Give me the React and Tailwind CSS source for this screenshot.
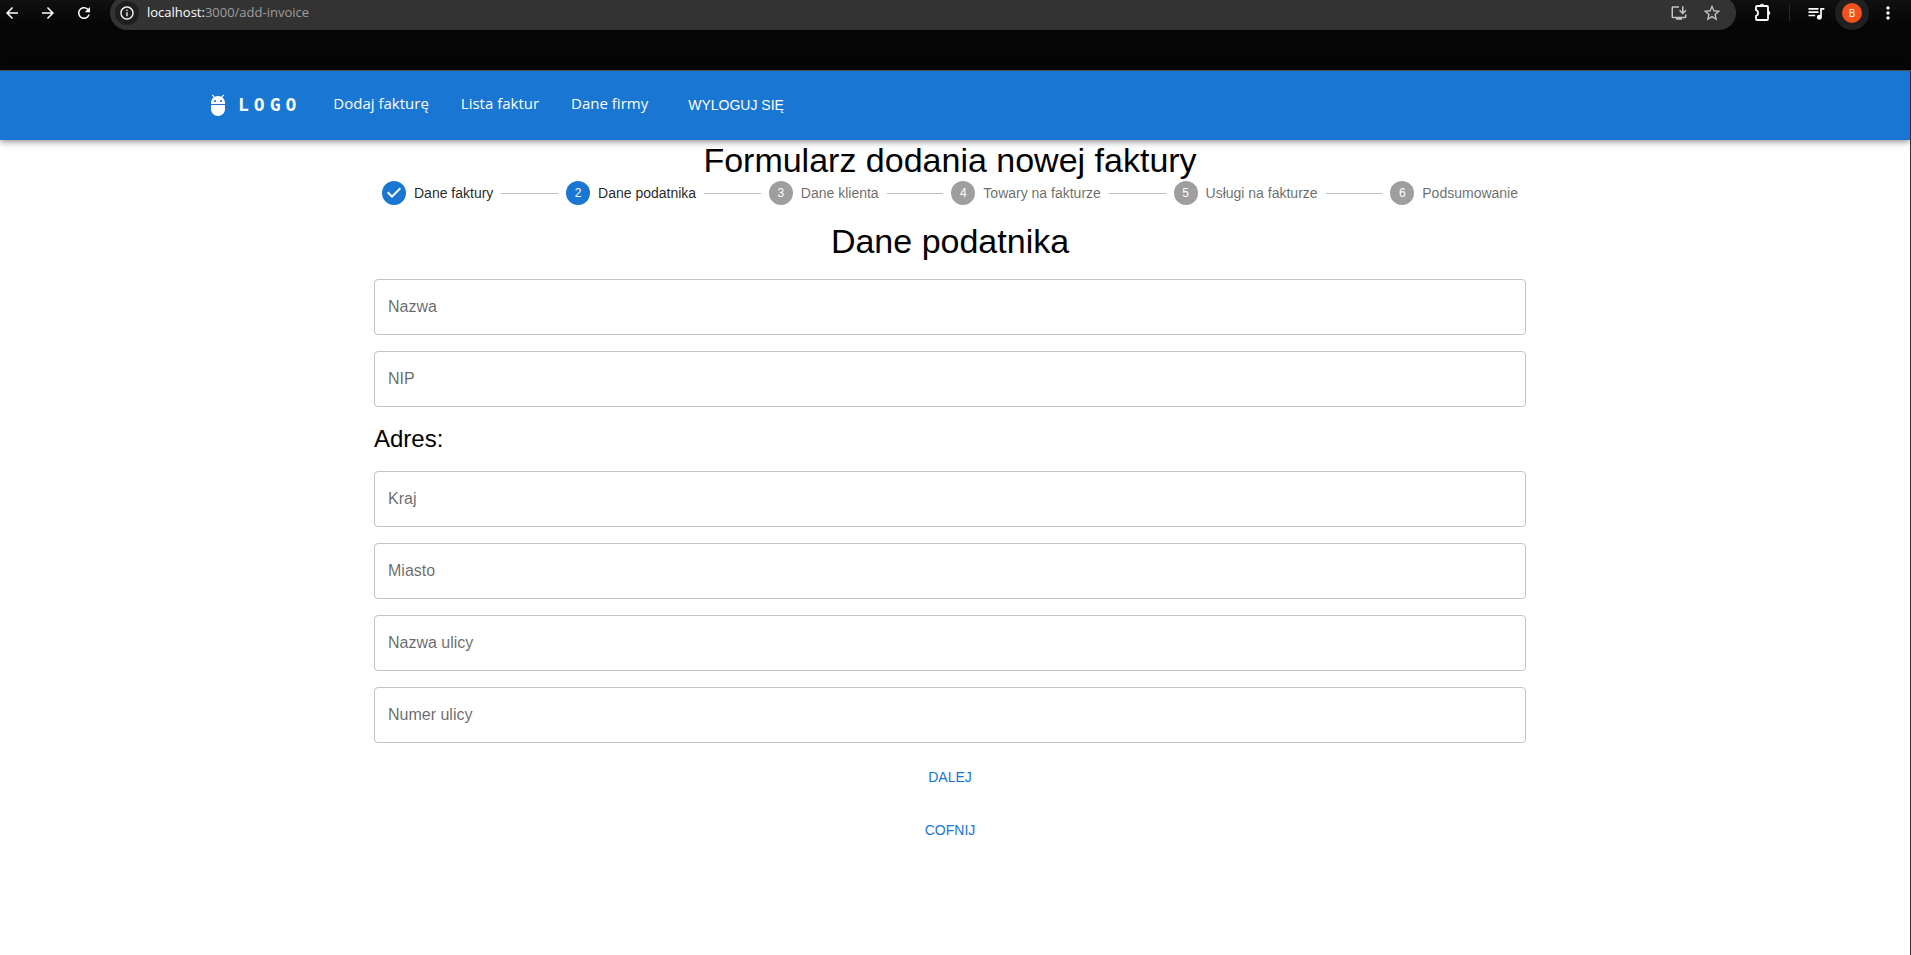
import React from "react";
import {
  MdAdb,
  MdArrowBack,
  MdArrowForward,
  MdInfoOutline,
  MdMoreVert,
  MdOutlineInstallDesktop,
  MdQueueMusic,
  MdRefresh,
  MdStarBorder,
} from "react-icons/md";

const SANS = "font-['Liberation_Sans',Arial,sans-serif]";
const UI = "font-['Open_Sans','Noto_Sans',sans-serif]";

const navLinks = ["Dodaj fakturę", "Lista faktur", "Dane firmy"];

const steps = [
  "Dane faktury",
  "Dane podatnika",
  "Dane klienta",
  "Towary na fakturze",
  "Usługi na fakturze",
  "Podsumowanie",
];
const currentStep = 1;

function PuzzleIcon() {
  return (
    <svg viewBox="0 0 20 20" className="size-5" fill="none" aria-hidden="true">
      <path
        d="M3 7.2V4a1 1 0 0 1 1-1h10a1 1 0 0 1 1 1v12a1 1 0 0 1-1 1H4a1 1 0 0 1-1-1v-3.2c1.400-.3 2-1.500 2-2.800s-.6-2.500-2-2.800z"
        stroke="currentColor"
        strokeWidth="1.800"
        strokeLinejoin="round"
      />
      <path d="M7 3a2 2 0 0 1 4 0zM15 8a2 2 0 0 1 0 4z" fill="currentColor" stroke="currentColor" strokeWidth=".5" />
    </svg>
  );
}

function DoneIcon() {
  return (
    <svg viewBox="0 0 24 24" className="size-6" fill="currentColor" role="img" aria-label="Ukończono">
      <path d="M12 0a12 12 0 1 0 0 24 12 12 0 0 0 0-24zm-2 17l-5-5 1.400-1.400 3.600 3.600 7.600-7.600L19 8l-9 9z" />
    </svg>
  );
}

function BrowserBar() {
  return (
    <div className={`${UI} h-[71px] overflow-hidden border-b border-[#555555] bg-[#050505] bg-linear-to-b from-[#111111] to-[#050505] to-40% text-white`}>
      <div className="flex h-[26px] items-center">
        <button aria-label="Wstecz" className="ml-1 flex w-4 justify-center">
          <MdArrowBack className="size-[18px] shrink-0" />
        </button>
        <button aria-label="Dalej" className="ml-5 flex w-4 justify-center">
          <MdArrowForward className="size-[18px] shrink-0" />
        </button>
        <button aria-label="Odśwież" className="ml-5 flex w-4 justify-center">
          <MdRefresh className="size-[18px] shrink-0" />
        </button>
        <div className="ml-[18px] flex h-[34px] grow items-center rounded-full bg-[#333333] pr-[14px] pl-[5px]">
          <button aria-label="Informacje o stronie" className="flex size-6 items-center justify-center rounded-full bg-[#1f1f1f]">
            <MdInfoOutline className="size-4" />
          </button>
          <p className="ml-2 grow text-[13px] text-[#9e9e9e]">
            <span className="text-white">localhost:</span>3000/add-invoice
          </p>
          <button aria-label="Zainstaluj" className="text-[#c4c4c4]">
            <MdOutlineInstallDesktop className="size-[18px]" />
          </button>
          <button aria-label="Dodaj do zakładek" className="ml-3.5 text-[#c4c4c4]">
            <MdStarBorder className="size-5" />
          </button>
        </div>
        <button aria-label="Rozszerzenia" className="ml-[17px]">
          <PuzzleIcon />
        </button>
        <span className="ml-4 h-4 w-px bg-[#2a2a2a]" />
        <button aria-label="Multimedia" className="ml-4">
          <MdQueueMusic className="size-5" />
        </button>
        <button aria-label="Profil" className="ml-[9px] flex size-[34px] items-center justify-center rounded-full bg-[#202020]">
          <span className="flex size-5 items-center justify-center rounded-full bg-[#f4511e] text-[10px]">B</span>
        </button>
        <button aria-label="Menu" className="mr-[13px] ml-[9px]">
          <MdMoreVert className="size-5" />
        </button>
      </div>
    </div>
  );
}

function NavBar() {
  return (
    <header className="relative bg-[#1976d2] pr-2.5 text-white shadow-[0_2px_4px_-1px_rgba(0,0,0,0.2),0_4px_5px_0_rgba(0,0,0,0.14),0_1px_10px_0_rgba(0,0,0,0.12)]">
      <div className="mx-auto flex h-[69px] max-w-[1536px] items-center px-6 pb-0.5">
        <MdAdb className="mr-2 size-6" />
        <a href="/" className="mr-8 font-['DejaVu_Sans_Mono',monospace] text-lg font-bold tracking-[5px]">
          LOGO
        </a>
        <nav className={`${UI} flex gap-8 pb-0.5 text-[15px]`}>
          {navLinks.map((label) => (
            <a key={label} href="#">
              {label}
            </a>
          ))}
        </nav>
        <button className="ml-8 px-2 text-sm uppercase">Wyloguj się</button>
      </div>
    </header>
  );
}

function Stepper() {
  return (
    <ol className="flex items-center text-sm">
      {steps.map((label, i) => (
        <React.Fragment key={label}>
          {i > 0 && <li aria-hidden="true" className="h-px grow bg-[#bdbdbd]" />}
          <li className={`flex items-center gap-2 px-2 ${i <= currentStep ? "text-black/87" : "text-black/60"}`}>
            {i < currentStep ? (
              <span className="text-[#1976d2]">
                <DoneIcon />
              </span>
            ) : (
              <span
                className={`flex size-6 items-center justify-center rounded-full text-xs text-white ${i === currentStep ? "bg-[#1976d2]" : "bg-[#9e9e9e]"}`}
              >
                {i + 1}
              </span>
            )}
            {label}
          </li>
        </React.Fragment>
      ))}
    </ol>
  );
}

function Field({ id, label }) {
  return (
    <div className="relative">
      <input
        id={id}
        placeholder=" "
        className="peer block h-14 w-full rounded border border-[#c4c4c4] px-3.5 text-base outline-none focus:border-[#1976d2]"
      />
      <label
        htmlFor={id}
        className="pointer-events-none absolute top-4 left-3.5 bg-white text-base text-black/60 peer-focus:-top-2 peer-focus:text-xs peer-[:not(:placeholder-shown)]:-top-2 peer-[:not(:placeholder-shown)]:text-xs"
      >
        {label}
      </label>
    </div>
  );
}

function TextButton({ children }) {
  return <button className="h-[37px] px-2 pb-0.5 text-sm text-[#1976d2] uppercase">{children}</button>;
}

export default function App() {
  return (
    <div className={`${SANS} flex min-h-screen flex-col bg-white text-black`}>
      <BrowserBar />
      <div className="grow border-r border-[#333333]">
        <NavBar />
        <main className="pr-2.5">
          <div className="mx-auto max-w-[1200px] px-6">
            <h1 className="pb-px text-center text-[34px] leading-10">Formularz dodania nowej faktury</h1>
            <Stepper />
            <form className="mt-4 flex flex-col gap-4">
              <h2 className="pb-0.5 text-center text-[34px] leading-10">Dane podatnika</h2>
              <Field id="name" label="Nazwa" />
              <Field id="nip" label="NIP" />
              <h3 className="text-2xl">Adres:</h3>
              <Field id="country" label="Kraj" />
              <Field id="city" label="Miasto" />
              <Field id="street" label="Nazwa ulicy" />
              <Field id="street-number" label="Numer ulicy" />
              <div className="flex flex-col items-center gap-4">
                <TextButton>Dalej</TextButton>
                <TextButton>Cofnij</TextButton>
              </div>
            </form>
          </div>
        </main>
      </div>
    </div>
  );
}
